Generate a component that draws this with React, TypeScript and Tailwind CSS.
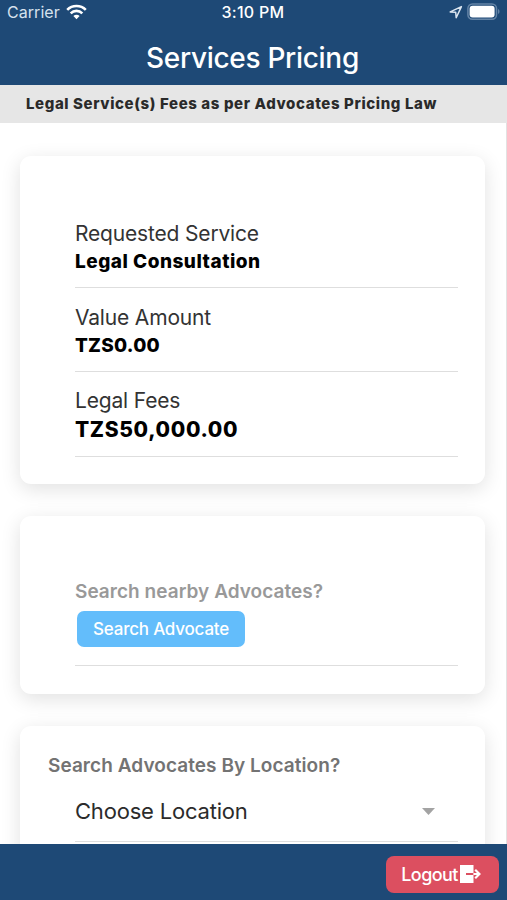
const fees = [
  { label: "Requested Service", value: "Legal Consultation", row: "h-[84px] pt-4", valueClass: "text-[19px] tracking-[0.5px]" },
  { label: "Value Amount", value: "TZS0.00", row: "h-[84px] pt-4", valueClass: "text-[19px] tracking-[0.25px]" },
  { label: "Legal Fees", value: "TZS50,000.00", row: "h-[85px] pt-[15px]", valueClass: "pt-px text-[21px] tracking-[0.65px]" },
];

function StatusBar() {
  return (
    <div className="grid h-6 grid-cols-3 items-center pr-[7px] pl-[7px] text-[16px] leading-6">
      <div className="flex items-center gap-[6px]">
        <span className="tracking-[0.05px] text-[#d6e2ee]">Carrier</span>
        <svg width="21" height="16" viewBox="0 0 21 16" fill="none" stroke="white" strokeWidth="2.6">
          <path d="M1.2 5.8a13.2 13.2 0 0 1 18.6 0" />
          <path d="M4.7 9.3a8.2 8.2 0 0 1 11.6 0" />
          <path d="M7.4 12.1a4.4 4.4 0 0 1 6.2 0L10.5 15.2z" fill="white" stroke="none" />
        </svg>
      </div>
      <span className="pr-px text-center font-medium tracking-[0.3px] whitespace-nowrap">3:10 PM</span>
      <div className="flex items-center justify-end gap-[4px]">
        <svg width="14" height="14" viewBox="0 0 14 14" fill="none" stroke="#dce6f0" strokeWidth="1.5" strokeLinejoin="round">
          <path d="M12.4 1.6L1.2 6.9l5.5.4.5 5.5z" />
        </svg>
        <svg width="33" height="18" viewBox="0 0 33 18">
          <rect x="0.9" y="0.9" width="28.6" height="15.4" rx="4.5" fill="none" stroke="#6484a6" strokeWidth="1.5" />
          <rect x="2.6" y="2.8" width="25" height="11.6" rx="3" fill="white" />
          <path d="M31 6c2 .8 2 4.2 0 5z" fill="#6484a6" />
        </svg>
      </div>
    </div>
  );
}

export default function App() {
  return (
    <div className="flex h-[900px] w-[507px] flex-col overflow-hidden bg-white font-['Inter','Liberation_Sans',sans-serif]">
      <header className="h-[85px] shrink-0 bg-[#1e4976] text-white">
        <StatusBar />
        <h1 className="pt-[14px] pr-[2px] text-center text-[28px] leading-10 font-medium tracking-[-0.3px]">Services Pricing</h1>
      </header>

      <div className="h-[38px] shrink-0 bg-[#e6e6e6] pl-[26px] text-[15px] leading-[38px] font-extrabold tracking-[0.61px] whitespace-nowrap text-[#2a2a2a]">
        Legal Service(s) Fees as per Advocates Pricing Law
      </div>

      <main className="flex min-h-0 flex-1 flex-col gap-8 overflow-hidden border-r border-[#e2e2e2] pt-[33px] pr-[21px] pl-5">
        <section className="h-[328px] shrink-0 rounded-[11px] bg-white pt-12 pr-[27px] pl-[55px] shadow-[0_5px_20px_rgba(0,0,0,0.12)]">
          {fees.map((fee) => (
            <div key={fee.label} className={`border-b border-[#dedede] ${fee.row}`}>
              <div className="text-[21px] leading-7 tracking-[-0.17px] text-[#333]">{fee.label}</div>
              <div className={`leading-7 font-extrabold text-black ${fee.valueClass}`}>{fee.value}</div>
            </div>
          ))}
        </section>

        <section className="h-[178px] shrink-0 rounded-[11px] bg-white pt-[62px] pr-[27px] pl-[55px] shadow-[0_5px_20px_rgba(0,0,0,0.12)]">
          <div className="h-[88px] border-b border-[#dedede]">
            <h2 className="text-[19px] leading-7 font-semibold tracking-[0.04px] text-[#999]">Search nearby Advocates?</h2>
            <button className="mt-[5px] ml-[2px] block h-9 w-[168px] rounded-[7px] bg-[#63bdfb] pt-px text-[17px] font-medium tracking-[-0.2px] text-white">
              Search Advocate
            </button>
          </div>
        </section>

        <section className="h-[200px] shrink-0 rounded-[11px] bg-white pt-[26px] pr-[27px] pl-7 shadow-[0_5px_20px_rgba(0,0,0,0.12)]">
          <h2 className="text-[19px] leading-7 font-semibold tracking-[0.06px] text-[#737373]">Search Advocates By Location?</h2>
          <div className="ml-[27px] flex h-[62px] items-center justify-between border-b border-[#dedede] pr-[23px]">
            <span className="text-[22px] leading-7 tracking-[-0.2px] text-[#2b2b2b]">Choose Location</span>
            <svg className="mt-[2px]" width="13" height="7" viewBox="0 0 13 7" fill="#a3a3a3">
              <path d="M0 0h13L6.5 7z" />
            </svg>
          </div>
        </section>
      </main>

      <footer className="flex h-14 shrink-0 items-center justify-end bg-[#1e4976] pt-1 pr-2">
        <button className="flex h-[37px] w-[113px] items-center justify-center rounded-[8px] bg-[#dc4f60] pr-[3px] text-[18px] font-medium tracking-[-0.6px] text-white">
          <span>Logout</span>
          <svg className="ml-[2px]" width="21" height="18" viewBox="0 0 21 18" fill="none">
            <path d="M0 0h13.5v18H0z" fill="white" />
            <path d="M6 9h7.5" stroke="#dc4f60" strokeWidth="2" />
            <path d="M13.5 9H20M15.2 4.7L19.5 9l-4.3 4.3" stroke="white" strokeWidth="2.2" />
          </svg>
        </button>
      </footer>
    </div>
  );
}
